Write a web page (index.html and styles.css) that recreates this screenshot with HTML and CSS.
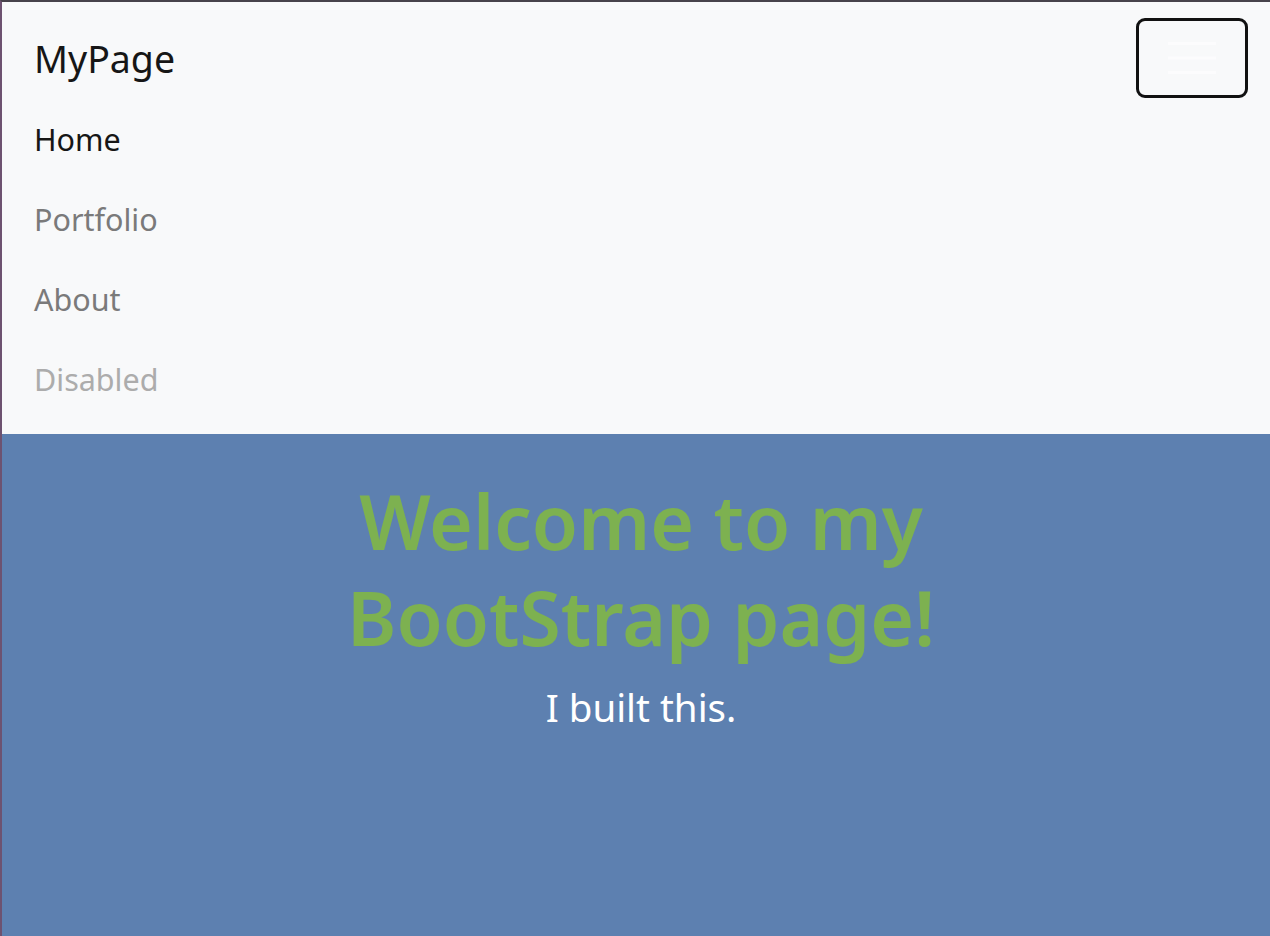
FILE: index.html
```html
<!DOCTYPE html>
<html lang="en">
<head>
<meta charset="utf-8">
<title>MyPage</title>
<link rel="stylesheet" href="styles.css">
</head>
<body>
<div class="frame">
  <nav class="navbar">
    <div class="navbar-top">
      <a class="brand" href="#">MyPage</a>
      <button class="toggler" type="button" aria-label="Toggle navigation">
        <span class="toggler-icon">
          <svg width="48" height="34" viewBox="0 0 48 34"><path d="M0 2.5h48M0 17h48M0 31.5h48" stroke="#fcfcfd" stroke-width="3"/></svg>
        </span>
      </button>
    </div>
    <ul class="nav">
      <li><a class="nav-link active" href="#">Home</a></li>
      <li><a class="nav-link" href="#">Portfolio</a></li>
      <li><a class="nav-link" href="#">About</a></li>
      <li><span class="nav-link disabled">Disabled</span></li>
    </ul>
  </nav>
  <section class="hero">
    <h1 class="hero-title">Welcome to my<br>BootStrap page!</h1>
    <p class="lead">I built this.</p>
  </section>
</div>
</body>
</html>
```

FILE: styles.css
```css
html, body {
  margin: 0;
  padding: 0;
  height: 100%;
}
body {
  font-family: "Noto Sans", "Open Sans", sans-serif;
  background: #5d80b0;
}
.frame {
  box-sizing: border-box;
  min-height: 100%;
  border-top: 2px solid #47434b;
  border-left: 2px solid #6d5270;
  display: flex;
  flex-direction: column;
}
.navbar {
  background: #f8f9fa;
  padding: 16px 22px 16px 32px;
}
.navbar-top {
  display: flex;
  justify-content: space-between;
  align-items: center;
}
.brand {
  font-size: 37.5px;
  line-height: 60px;
  padding: 11px 0 9px;
  color: #161616;
  text-decoration: none;
}
.toggler {
  box-sizing: border-box;
  width: 112px;
  height: 80px;
  border: 3px solid #111;
  border-radius: 9px;
  background: transparent;
  display: flex;
  align-items: center;
  justify-content: center;
  padding: 0;
}
.toggler-icon {
  display: flex;
}
.nav {
  list-style: none;
  margin: 0;
  padding: 0;
}
.nav-link {
  display: block;
  font-size: 30.5px;
  line-height: 48px;
  padding: 17px 0 15px;
  color: #7a7a7a;
  text-decoration: none;
}
.nav-link.active {
  color: #161616;
}
.nav-link.disabled {
  color: #acacac;
}
.hero {
  flex: 1;
  text-align: center;
  padding: 39px 27px 30px 37px;
}
.hero-title {
  margin: 0;
  font-size: 75px;
  line-height: 96px;
  font-weight: 600;
  color: #7db150;
}
.lead {
  margin: 12px 0 0;
  font-size: 38.5px;
  line-height: 60px;
  font-weight: 400;
  color: #ffffff;
}
```
